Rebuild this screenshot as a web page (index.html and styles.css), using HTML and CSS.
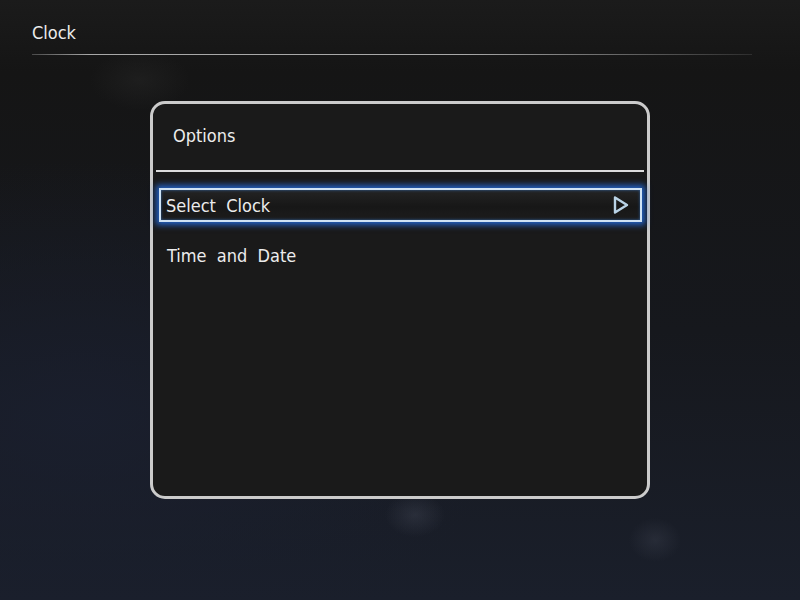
FILE: index.html
```html
<!DOCTYPE html>
<html lang="en">
<head>
    <meta charset="UTF-8">
    <title>Clock</title>
    <link rel="stylesheet" href="styles.css">
</head>
<body>
    <div class="screen">
        <div class="topbar">
            <span class="topbar-title">Clock</span>
        </div>
        <div class="topbar-line"></div>

        <div class="panel">
            <div class="panel-title">Options</div>
            <div class="panel-sep"></div>
            <ul class="menu">
                <li class="menu-item selected">
                    <span>Select&nbsp; Clock</span>
                    <svg class="arrow" width="18" height="20" viewBox="0 0 18 20">
                        <path d="M3 2.5 L15 10 L3 17.5 Z" fill="none" stroke="#b9d3e6" stroke-width="2.4" stroke-linejoin="round"/>
                    </svg>
                </li>
                <li class="menu-item">
                    <span>Time&nbsp; and&nbsp; Date</span>
                </li>
            </ul>
        </div>
    </div>
</body>
</html>
```

FILE: styles.css
```css
body {
    margin: 0;
    font-family: "DejaVu Sans Condensed", "DejaVu Sans", sans-serif;
    color: #ececec;
}

.screen {
    width: 800px;
    height: 600px;
    overflow: hidden;
    background:
        radial-gradient(ellipse 50px 30px at 140px 80px, rgba(50, 50, 50, 0.3), transparent),
        radial-gradient(ellipse 30px 22px at 415px 515px, rgba(80, 85, 100, 0.3), transparent),
        radial-gradient(ellipse 26px 22px at 655px 540px, rgba(80, 85, 100, 0.25), transparent),
        radial-gradient(ellipse 420px 260px at 80px 420px, rgba(26, 31, 46, 0.9), transparent),
        linear-gradient(180deg, #1b1b1b 0%, #151515 12%, #16181d 55%, #1a1f2b 100%);
}

.topbar {
    height: 54px;
    padding-left: 32px;
    display: flex;
    align-items: center;
}

.topbar-title {
    font-size: 18px;
    margin-top: 11px;
}

.topbar-line {
    height: 1px;
    margin-left: 32px;
    width: 720px;
    background: linear-gradient(90deg, #4a4a4a 0%, #a8a8a8 8%, #a8a8a8 60%, #2e2e2e 100%);
}

.panel {
    box-sizing: border-box;
    margin: 46px 0 0 150px;
    width: 500px;
    height: 398px;
    border: 3px solid #cbcbcb;
    border-radius: 15px;
    background: #1a1a1a;
}

.panel-title {
    height: 66px;
    padding-left: 20px;
    font-size: 18px;
    display: flex;
    align-items: center;
    margin-top: -2px;
}

.panel-sep {
    height: 2px;
    margin: 2px 3px 0 3px;
    background: #dcdcdc;
}

.menu {
    list-style: none;
    margin: 0;
    padding: 16px 0 0 0;
}

.menu-item {
    box-sizing: border-box;
    height: 34px;
    margin: 0 5px 16px 6px;
    padding: 0 8px 0 8px;
    font-size: 18px;
    display: flex;
    align-items: center;
    justify-content: space-between;
}

.menu-item.selected {
    padding-left: 5px;
    border: 2px solid #cfe3f5;
    background: linear-gradient(180deg, #242424, #171717 55%, #1c1c1c);
    box-shadow: 0 0 6px 3px rgba(35, 105, 215, 0.9), inset 0 0 3px rgba(60, 130, 220, 0.7);
}

.arrow {
    display: block;
    margin-right: 2px;
}
```
